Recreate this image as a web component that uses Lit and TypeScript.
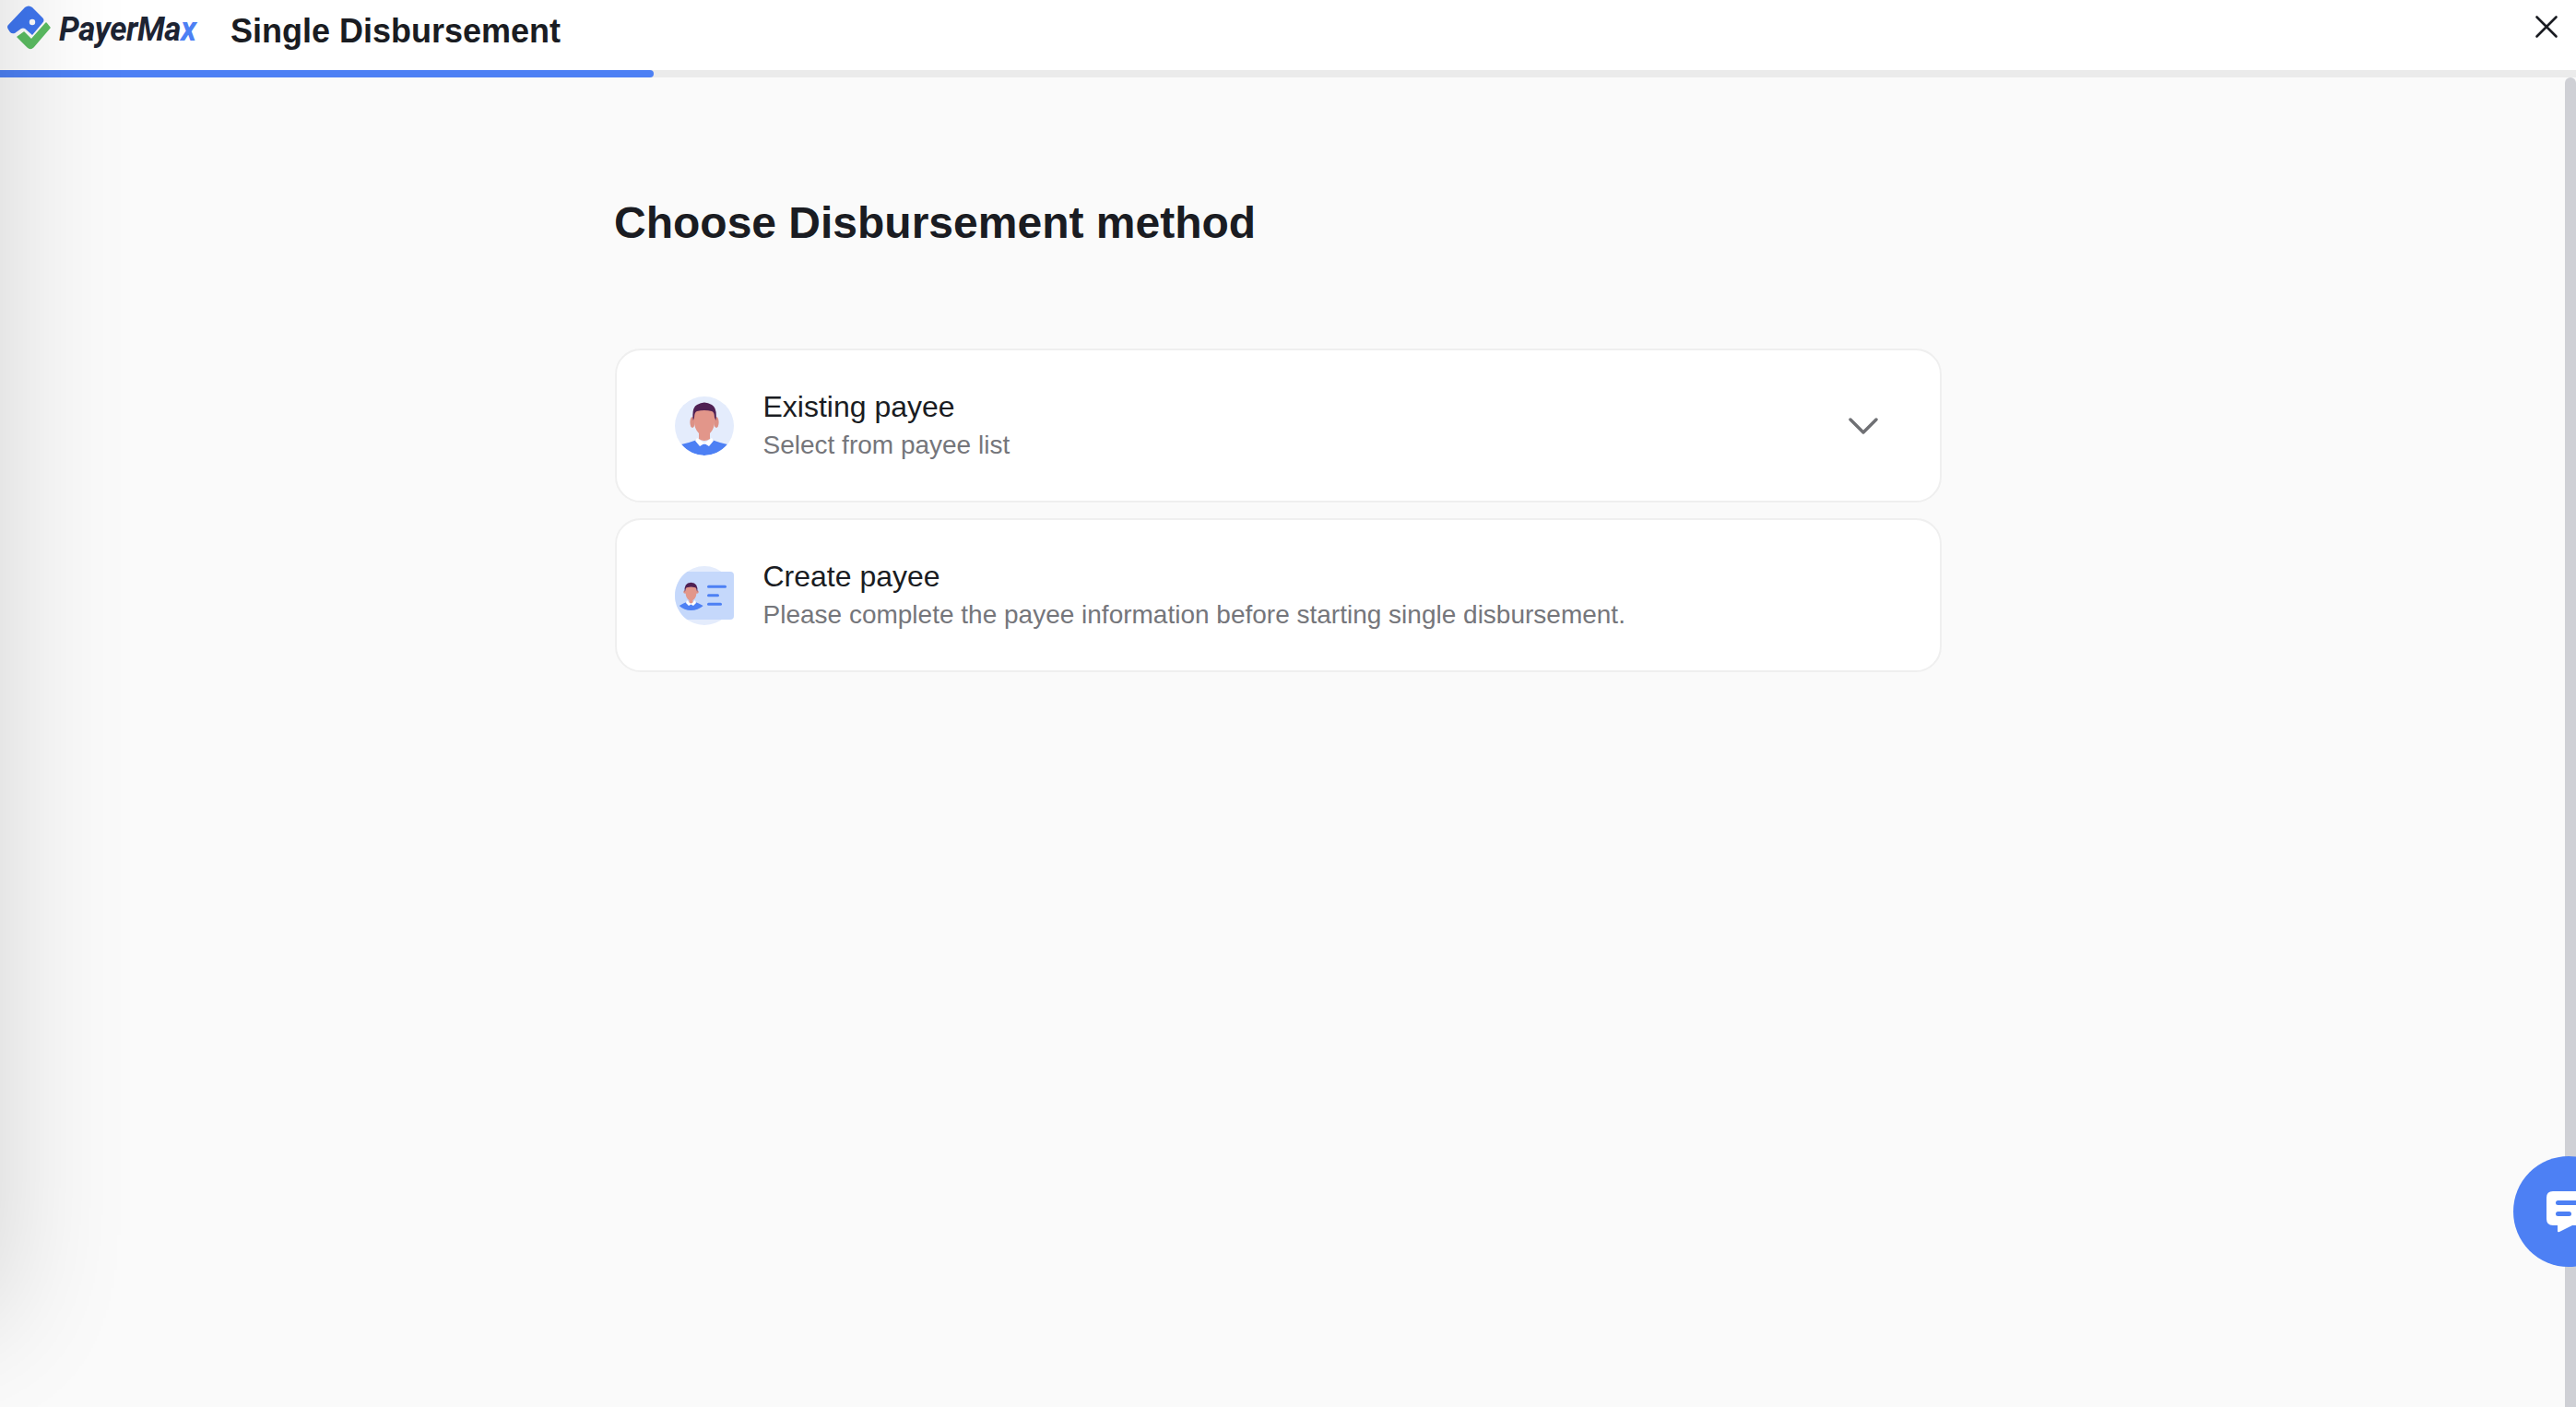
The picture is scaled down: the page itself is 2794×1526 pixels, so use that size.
import { LitElement, html, css } from "lit";
import { customElement } from "lit/decorators.js";

@customElement("app-root")
export class AppRoot extends LitElement {
  static styles = css`
    :host { display: block; width: 100%; height: 1526px; overflow: hidden; position: relative; background: #fafafa; font-family: "Liberation Sans", Arial, sans-serif; color: #1a1c22; }
    .shade { position: absolute; left: -400px; top: -200px; width: 400px; height: 1630px; box-shadow: 0 0 130px 0 rgba(0,0,0,.16); pointer-events: none; z-index: 5; }
    .head { height: 76px; background: #fff; display: flex; align-items: flex-start; position: relative; }
    .logo { width: 56px; height: 56px; flex: none; }
    .brand { margin: 12px 0 0 8px; font: italic 700 36px/40px Roboto, sans-serif; letter-spacing: -.4px; width: 186px; color: #1d2433; flex: none; transform: scaleX(.97); transform-origin: left; }
    .brand span { color: #4d80f4; }
    .head h1 { margin: 14px 0 0 0; font-size: 36px; line-height: 40px; font-weight: 700; }
    .close { position: absolute; left: 2749px; top: 16px; width: 26px; height: 26px; }
    .track { height: 8px; background: #ebebeb; }
    .bar { width: 709px; height: 8px; background: #4d80f4; border-radius: 0 4px 4px 0; }
    .scroll { position: absolute; right: 0; top: 84px; bottom: 0; width: 12px; background: #cfd0d5; border-radius: 6px 6px 0 0; }
    main { width: 1439px; margin-left: 667px; }
    h2 { margin: 0 0 0 -1px; padding-top: 130px; font-size: 48px; line-height: 56px; font-weight: 700; height: 164px; box-sizing: content-box; }
    .cards { display: flex; flex-direction: column; gap: 17px; }
    .card { box-sizing: border-box; height: 167px; background: #fff; border: 2px solid #efefef; border-radius: 28px; display: flex; align-items: center; padding: 0 66px 0 63px; }
    .icon { width: 64px; height: 64px; flex: none; margin-right: 31.5px; }
    .text { flex: 1; }
    .t { font-size: 32px; line-height: 42px; color: #1a1c22; }
    .s { font-size: 28px; line-height: 42px; color: #75767b; }
    .chev { width: 34px; height: 22px; flex: none; }
    .fab { position: absolute; left: 2726px; top: 1254px; width: 120px; height: 120px; border-radius: 50%; background: #4d80f4; z-index: 3; }
    .fab svg { position: absolute; left: 36px; top: 38px; width: 48px; height: 48px; }
  `;

  render() {
    return html`
      <div class="head">
        <svg class="logo" viewBox="0 0 56 56">
          <path d="M19 40 L26 35 L34 43 L50 25 L54 30 L36 51 Q33 54 30 51 Z" fill="#5bbd62" stroke="#5bbd62" stroke-width="1.500" stroke-linejoin="round"/>
          <path d="M9 27 L27 8 Q31 5 35 8 L46 19 Q49 22 46 25 L35 38 L27 31 Q25 30 23 31 L16 36 Q13 37 11 35 L9 32 Q7 29 9 27 Z" fill="#3f76f0"/>
          <circle cx="35" cy="24" r="3.200" fill="#fff"/>
        </svg>
        <div class="brand">PayerMa<span>x</span></div>
        <h1>Single Disbursement</h1>
        <svg class="close" viewBox="0 0 26 26"><path d="M2.500 2.500 L23.500 23.500 M23.500 2.500 L2.500 23.500" stroke="#1a1c22" stroke-width="2.600" stroke-linecap="round"/></svg>
      </div>
      <div class="track"><div class="bar"></div></div>
      <main>
        <h2>Choose Disbursement method</h2>
        <div class="cards">
          <div class="card">
            <svg class="icon" viewBox="0 0 64 64">
              <circle cx="32" cy="32" r="32" fill="#e4ecfc"/>
              <clipPath id="c1"><circle cx="32" cy="32" r="32"/></clipPath>
              <g clip-path="url(#c1)">
                <path d="M7 52 Q16 50 24 47 L32 52 L40 47 Q48 50 57 52 Q46 64 32 64 Q18 64 7 52Z" fill="#4d80f4"/>
                <path d="M24 45 L31 50 L33 50 L40 45 L42 48 L37 54 L32 51 L27 54 L22 48Z" fill="#fff"/>
                <ellipse cx="19" cy="28" rx="2.600" ry="6" fill="#dc9186"/>
                <ellipse cx="45" cy="28" rx="2.600" ry="6" fill="#dc9186"/>
                <path d="M21 14 H43 V27 Q43 35 38 40 L38 46 Q32 50 26 46 L26 40 Q21 35 21 27Z" fill="#e2968a"/>
                <path d="M19.800 26 Q18 12 24 9 Q32 4 40 9 Q46 12 44.500 26 L43 23 Q43 17 40 16 Q32 14 24 16 Q21 17 21 23 Z" fill="#4f2053"/>
              </g>
            </svg>
            <div class="text"><div class="t">Existing payee</div><div class="s">Select from payee list</div></div>
            <svg class="chev" viewBox="0 0 34 22"><path d="M3 4 L17 18 L31 4" fill="none" stroke="#6f7074" stroke-width="3.400" stroke-linecap="round" stroke-linejoin="round"/></svg>
          </div>
          <div class="card">
            <svg class="icon" viewBox="0 0 64 64">
              <circle cx="32" cy="32" r="32" fill="#e4ecfc"/>
              <path d="M13.350 6 H60 Q64 6 64 10 V54 Q64 58 60 58 H13.350 A32 32 0 0 1 13.350 6 Z" fill="#c5d8fb"/>
              <path d="M4.700 43 Q9 40 14 38.500 L17.500 41 L21 38.500 Q26 40 30.700 43 Q25 48 17.500 48 Q10 48 4.700 43Z" fill="#4d80f4"/>
              <path d="M13 37 L17.500 40.500 L22 37 L23 40 L20 43 L17.500 41.500 L15 43 L12 40Z" fill="#fff"/>
              <circle cx="11" cy="28" r="1.800" fill="#dc9186"/>
              <circle cx="24" cy="28" r="1.800" fill="#dc9186"/>
              <path d="M11.500 22 H23.500 V29 Q23 35 19.500 37 V39.500 L17.500 40.500 L15.500 39.500 V37 Q12 35 11.500 29Z" fill="#e2968a"/>
              <path d="M10.700 28 Q9.500 18 17.500 17.700 Q25.500 18 24.300 28 L23.500 26 Q23.500 23 21 23 Q17.500 22 14 23 Q11.500 23 11.500 26Z" fill="#4f2053"/>
              <rect x="35" y="20.800" width="21" height="3" rx="1.500" fill="#4d80f4"/>
              <rect x="35" y="30.200" width="13" height="3" rx="1.500" fill="#4d80f4"/>
              <rect x="35" y="39.800" width="16" height="3" rx="1.500" fill="#4d80f4"/>
            </svg>
            <div class="text"><div class="t">Create payee</div><div class="s">Please complete the payee information before starting single disbursement.</div></div>
          </div>
        </div>
      </main>
      <div class="scroll"></div>
      <div class="fab">
        <svg viewBox="0 0 48 48">
          <path d="M7 0 H48 V37 H28 L14 44 Q12 45 12 43 V37 H7 Q0 37 0 30 V7 Q0 0 7 0Z" fill="#fff"/>
          <rect x="10" y="10" width="38" height="5" rx="2.500" fill="#4d80f4"/>
          <rect x="10" y="22" width="17" height="5" rx="2.500" fill="#4d80f4"/>
        </svg>
      </div>
      <div class="shade"></div>
    `;
  }
}
